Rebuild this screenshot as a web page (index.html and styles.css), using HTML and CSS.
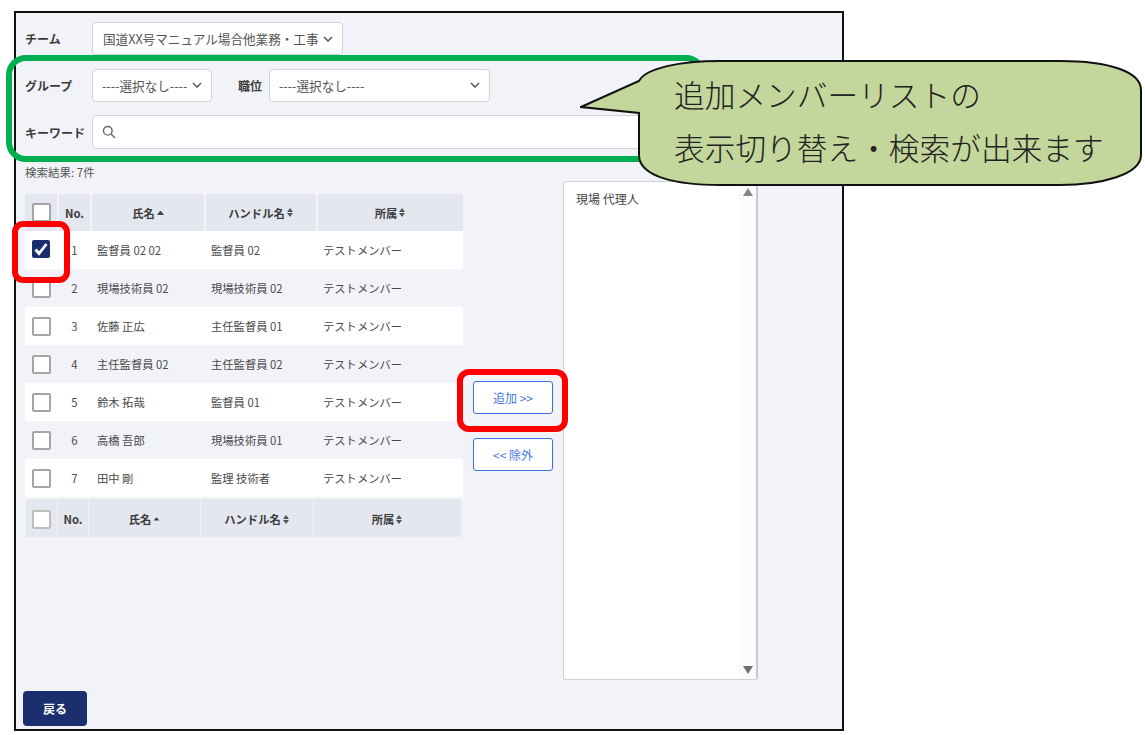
FILE: index.html
```html
<!DOCTYPE html>
<html lang="ja">
<head>
<meta charset="utf-8">
<title>追加メンバー</title>
<link rel="stylesheet" href="styles.css">
</head>
<body>
<div class="panel">
  <div class="form-row">
    <span class="label">チーム</span>
    <div class="select select-team"><span>国道XX号マニュアル場合他業務・工事</span><svg class="chev" viewBox="0 0 10 6"><path d="M1 1l4 4 4-4"/></svg></div>
  </div>
  <div class="form-row form-row-mid">
    <span class="label">グループ</span>
    <div class="select select-group"><span>----選択なし----</span><svg class="chev" viewBox="0 0 10 6"><path d="M1 1l4 4 4-4"/></svg></div>
    <span class="label label-pos">職位</span>
    <div class="select select-pos"><span>----選択なし----</span><svg class="chev" viewBox="0 0 10 6"><path d="M1 1l4 4 4-4"/></svg></div>
  </div>
  <div class="form-row form-row-key">
    <span class="label">キーワード</span>
    <div class="select select-key"><svg class="search" viewBox="0 0 14 14"><circle cx="5.8" cy="5.8" r="4.3"/><path d="M9 9l4 4"/></svg></div>
  </div>
  <div class="main">
    <div class="left">
      <div class="result">検索結果: 7件</div>
      <div class="head">
        <div class="hc"><span class="cb"></span></div>
        <div class="hc">No.</div>
        <div class="hc">氏名<i class="sort-up"></i></div>
        <div class="hc">ハンドル名<i class="sort"></i></div>
        <div class="hc">所属<i class="sort"></i></div>
      </div>
      <div class="row row-w"><div class="cc"><span class="cb cb-on"><svg viewBox="0 0 18 18"><path d="M3.5 9.5L7 13.5L14.5 4"/></svg></span></div><div class="no">1</div><div class="td">監督員 02 02</div><div class="td">監督員 02</div><div class="td">テストメンバー</div></div>
      <div class="row"><div class="cc"><span class="cb"></span></div><div class="no">2</div><div class="td">現場技術員 02</div><div class="td">現場技術員 02</div><div class="td">テストメンバー</div></div>
      <div class="row row-w"><div class="cc"><span class="cb"></span></div><div class="no">3</div><div class="td">佐藤 正広</div><div class="td">主任監督員 01</div><div class="td">テストメンバー</div></div>
      <div class="row"><div class="cc"><span class="cb"></span></div><div class="no">4</div><div class="td">主任監督員 02</div><div class="td">主任監督員 02</div><div class="td">テストメンバー</div></div>
      <div class="row row-w"><div class="cc"><span class="cb"></span></div><div class="no">5</div><div class="td">鈴木 拓哉</div><div class="td">監督員 01</div><div class="td">テストメンバー</div></div>
      <div class="row"><div class="cc"><span class="cb"></span></div><div class="no">6</div><div class="td">高橋 吾郎</div><div class="td">現場技術員 01</div><div class="td">テストメンバー</div></div>
      <div class="row row-w"><div class="cc"><span class="cb"></span></div><div class="no">7</div><div class="td">田中 剛</div><div class="td">監理 技術者</div><div class="td">テストメンバー</div></div>
      <div class="foot">
        <div class="hc"><span class="cb cb-white"></span></div>
        <div class="hc">No.</div>
        <div class="hc">氏名<i class="sort-up sort-small"></i></div>
        <div class="hc">ハンドル名<i class="sort"></i></div>
        <div class="hc">所属<i class="sort"></i></div>
      </div>
    </div>
    <div class="mid">
      <button class="btn">追加 &gt;&gt;</button>
      <button class="btn">&lt;&lt; 除外</button>
    </div>
    <div class="list">
      <div class="list-item">現場 代理人</div>
      <div class="track"><i class="arr-up"></i><i class="arr-down"></i></div>
    </div>
  </div>
  <button class="back">戻る</button>
</div>

<div class="mark mark-green"></div>
<div class="mark mark-red-check"></div>
<div class="mark mark-red-add"></div>
<svg class="bubble" viewBox="0 0 566 130"><path d="M59 22C66 9 100 2 140 2L480 2C530 2 561 13 561 31L561 96C561 116 520 126 480 126L140 126C100 126 59 119 59 96L59 54L1 48Z"/></svg>
<div class="bubble-text"><div>追加メンバーリストの</div><div>表示切り替え・検索が出来ます</div></div>
</body>
</html>
```

FILE: styles.css
```css
* { box-sizing: border-box; }
html, body { margin: 0; background: #fff; }
body {
  position: relative;
  width: 1145px;
  height: 735px;
  padding: 11px 0 0 14px;
  overflow: hidden;
  font-family: "Noto Sans CJK JP", "Noto Sans", sans-serif;
  font-size: 11.3px;
  color: #4a4a4a;
}
.panel {
  display: flex;
  flex-direction: column;
  width: 830px;
  height: 720px;
  padding: 9px 9px 3px;
  border: 2px solid #111;
  background: #f2f3f8;
}
.form-row { display: flex; align-items: center; height: 33px; margin-bottom: 14px; }
.form-row-key { height: 34px; margin-top: -1px; margin-bottom: 14px; }
.form-row-mid .label, .form-row-mid .select { padding-bottom: 1px; }
.label { width: 67px; font-size: 12px; font-weight: 700; color: #3c3c3c; flex: none; }
.label-pos { width: 31px; margin-left: 26px; }
.select {
  display: flex;
  align-items: center;
  justify-content: space-between;
  height: 100%;
  background: #fff;
  border: 1px solid #d2d3d8;
  border-radius: 4px;
  font-size: 12.6px;
  color: #555;
  flex: none;
}
.select-team { width: 251px; padding: 0 9px 0 10px; }
.select-group { width: 120px; padding: 0 9px 0 9px; }
.select-pos { width: 221px; padding: 0 9px 0 9px; }
.select-key { width: 600px; padding: 0 9px; }
.chev { width: 10px; height: 6px; fill: none; stroke: #555; stroke-width: 1.5; }
.search { width: 14px; height: 14px; fill: none; stroke: #666; stroke-width: 1.4; }
.main { display: flex; flex: 1; gap: 10px; }
.left { width: 438px; flex: none; }
.result { height: 18px; line-height: 18px; font-size: 11.5px; color: #555; }
.head, .row {
  display: grid;
  grid-template-columns: 32px 31px 112px 110px 145px;
  column-gap: 2px;
}
.head { height: 37px; margin-top: 13px; }
.foot {
  display: grid;
  grid-template-columns: 31px 30px 111px 112px 147px;
  column-gap: 1px;
  width: 435px;
  height: 38px;
  margin: 2px 0 0 1px;
}
.hc {
  display: flex;
  align-items: center;
  justify-content: center;
  background: #e4e7f0;
  font-size: 11.3px;
  font-weight: 700;
  color: #3c3c3c;
}
.foot .hc { padding-top: 2px; }
.row { height: 38px; align-items: center; }
.row-w { background: #fff; }
.cc { display: flex; justify-content: center; }
.no { text-align: center; }
.td { padding-left: 5px; white-space: nowrap; }
.cb {
  display: block;
  width: 19px;
  height: 19px;
  background: #fff;
  border: 2px solid #a5a5a5;
  border-radius: 2px;
}
.cb-white { border-color: #bdbdbd; }
.cb-on { background: #1b2f6e; border: 0; width: 18px; height: 18px; margin-top: -2px; }
.cb-on svg { display: block; width: 18px; height: 18px; fill: none; stroke: #fff; stroke-width: 2.8; }
.sort-up, .sort { display: inline-block; margin-left: 2px; width: 7px; }
.sort-up { height: 0; border-left: 3.5px solid transparent; border-right: 3.5px solid transparent; border-bottom: 4px solid #444; }
.sort-small { transform: scale(.8); }
.sort { height: 9px; position: relative; }
.sort::before, .sort::after { content: ""; position: absolute; left: 0; width: 0; border-left: 3px solid transparent; border-right: 3px solid transparent; }
.sort::before { top: 0; border-bottom: 4px solid #555; }
.sort::after { bottom: 0; border-top: 4px solid #555; }
.mid { display: flex; flex-direction: column; gap: 24px; width: 80px; padding-top: 218px; flex: none; }
.btn {
  height: 33px;
  padding: 0;
  background: #fff;
  border: 1px solid #3f6fe0;
  border-radius: 3px;
  font: inherit;
  font-size: 12px;
  color: #4a78e4;
}
.list {
  display: flex;
  justify-content: space-between;
  width: 195px;
  height: 499px;
  margin-top: 18px;
  background: #fff;
  border: 1px solid #cfd0d4;
  border-right: 2px solid #c9c9cc;
  border-radius: 3px;
  flex: none;
}
.list-item { padding: 8px 0 0 12px; font-size: 12px; color: #444; }
.track {
  display: flex;
  flex-direction: column;
  justify-content: space-between;
  align-items: center;
  width: 17px;
  padding: 6px 0 5px;
  background: #fbfbfb;
}
.arr-up, .arr-down { width: 0; border-left: 5.5px solid transparent; border-right: 5.5px solid transparent; }
.arr-up { border-bottom: 8px solid #858585; }
.arr-down { border-top: 8px solid #707070; }
.back {
  width: 64px;
  height: 35px;
  margin-left: -2px;
  padding: 0;
  background: #1b2f6e;
  border: 0;
  border-radius: 4px;
  font: inherit;
  font-size: 12px;
  font-weight: 700;
  color: #fff;
}
.mark { position: absolute; background: transparent; }
.mark-green { left: 6px; top: 55px; width: 700px; height: 107px; border: 6px solid #00b050; border-radius: 20px; }
.mark-red-check { left: 12px; top: 221px; width: 58px; height: 62px; border: 6px solid #f00; border-radius: 11px; }
.mark-red-add { left: 457px; top: 369px; width: 111px; height: 63px; border: 6px solid #f00; border-radius: 12px; }
.bubble { position: absolute; left: 580px; top: 59px; width: 566px; height: 130px; }
.bubble path { fill: #c3d69b; stroke: #111; stroke-width: 2; }
.bubble-text {
  position: absolute;
  left: 674px;
  top: 67px;
  font-size: 30.7px;
  font-weight: 300;
  line-height: 53px;
  color: #222;
  white-space: nowrap;
}
```
